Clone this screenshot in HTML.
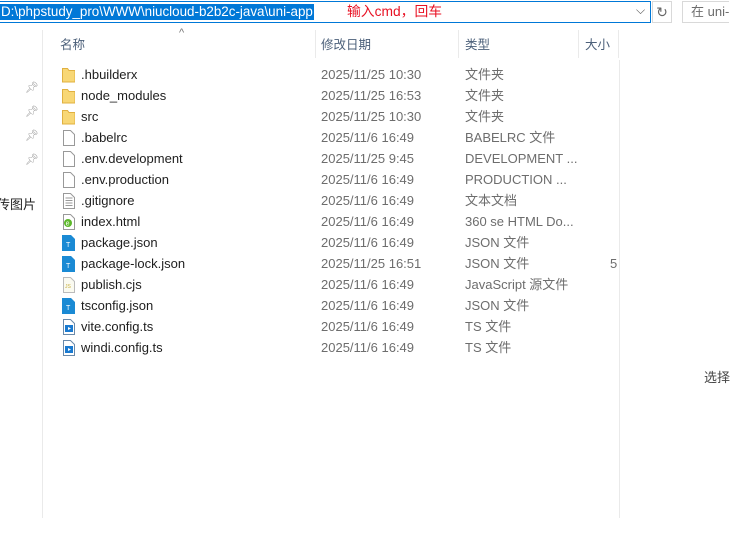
<!DOCTYPE html>
<html><head><meta charset="utf-8"><style>
*{margin:0;padding:0;box-sizing:border-box}
body{width:747px;height:543px;background:#fff;position:relative;overflow:hidden;font-family:"Liberation Sans","Noto Sans CJK SC",sans-serif;font-size:13px;color:#1e1e1e}
.a{position:absolute;white-space:nowrap}
.addr{left:-1px;top:1px;width:652px;height:22px;border:1px solid #0078d7}
.sel{left:0;top:4px;height:16px;background:#0078d7;color:#fff;padding:0 1px;line-height:16px;font-size:13.4px}
.red{left:347px;top:4px;color:#e81123;font-size:13.8px;line-height:16px}
.vl{position:absolute;width:1px;background:#eaeaea}
.hd{top:34px;color:#4c607a;font-size:12.5px}
.row{position:absolute;left:0;height:21px;width:747px}
.row span{position:absolute;top:3px;line-height:15px}
.n{left:81px;color:#1e1e1e}
.d{left:321px;color:#6d6d6d}
.t{left:465px;color:#6d6d6d}
.ic{position:absolute;left:62px;top:3px;width:13px;height:16px}
</style></head><body>
<div class="a addr"></div>
<div class="a sel">D:\phpstudy_pro\WWW\niucloud-b2b2c-java\uni-app</div>
<div class="a red">输入cmd，回车</div>
<div class="a" style="left:636px;top:3px;color:#555;font-size:12px">⌵</div>
<div class="a" style="left:652px;top:1px;width:20px;height:22px;border:1px solid #d9d9d9;color:#666;text-align:center;font-size:14px;line-height:20px">↻</div>
<div class="a" style="left:682px;top:1px;width:47px;height:22px;border:1px solid #d9d9d9;border-right:none;color:#6d6d6d;padding-left:8px;line-height:20px;overflow:hidden">在 uni-</div>
<div class="vl" style="left:42px;top:30px;height:488px"></div>
<div class="vl" style="left:619px;top:60px;height:458px"></div>
<div class="vl" style="left:315px;top:30px;height:28px"></div>
<div class="vl" style="left:458px;top:30px;height:28px"></div>
<div class="vl" style="left:578px;top:30px;height:28px"></div>
<div class="vl" style="left:618px;top:30px;height:28px"></div>
<div class="a" style="left:179px;top:27px;color:#777;font-size:11px">^</div>
<div class="a hd" style="left:60px">名称</div>
<div class="a hd" style="left:321px">修改日期</div>
<div class="a hd" style="left:465px">类型</div>
<div class="a hd" style="left:585px">大小</div>
<div class="a" style="left:25px;top:76px;color:#999;font-size:11px;line-height:24px">📌︎<br>📌︎<br>📌︎<br>📌︎</div>
<div class="a" style="left:-3px;top:194px">传图片</div>
<div class="a" style="left:704px;top:367px;color:#444">选择</div>
<svg width="0" height="0" style="position:absolute"><defs>
<g id="fo"><path d="M0.5 1.5h5l1.5 2h6v11.5h-12.5z" fill="#f8d775" stroke="#e0b040"/></g>
<g id="fi"><path d="M1.5 0.5h7l4 4v11h-11z" fill="#fff" stroke="#999"/></g>
<g id="tx"><path d="M1.5 0.5h7l4 4v11h-11z" fill="#fff" stroke="#999"/><path d="M3.5 5h7M3.5 7.5h7M3.5 10h7M3.5 12.5h7" stroke="#999"/></g>
<g id="ts"><path d="M0 0h9l4 4v12h-13z" fill="#1a8ad4"/><text x="4" y="12" font-size="7" fill="#fff" font-family="Liberation Sans">T</text></g>
<g id="js"><path d="M1.5 0.5h7l4 4v11h-11z" fill="#fafaf0" stroke="#bbb"/><text x="3" y="11" font-size="5" fill="#c9b040" font-family="Liberation Sans">JS</text></g>
<g id="ht"><path d="M1.5 0.5h7l4 4v11h-11z" fill="#fff" stroke="#999"/><circle cx="6" cy="9" r="4" fill="#5cb82a"/><text x="3.6" y="11.5" font-size="7" fill="#fff" font-family="Liberation Sans">e</text></g>
<g id="vt"><path d="M1.5 0.5h7l4 4v11h-11z" fill="#fff" stroke="#6a8aaa"/><rect x="3" y="6" width="8" height="7" fill="#1a7ad0"/><path d="M6 8l3 1.5-3 1.5z" fill="#fff"/></g>
</defs></svg>
<div class="row" style="top:64px"><svg class="ic"><use href="#fo"/></svg><span class="n">.hbuilderx</span><span class="d">2025/11/25 10:30</span><span class="t">文件夹</span></div>
<div class="row" style="top:85px"><svg class="ic"><use href="#fo"/></svg><span class="n">node_modules</span><span class="d">2025/11/25 16:53</span><span class="t">文件夹</span></div>
<div class="row" style="top:106px"><svg class="ic"><use href="#fo"/></svg><span class="n">src</span><span class="d">2025/11/25 10:30</span><span class="t">文件夹</span></div>
<div class="row" style="top:127px"><svg class="ic"><use href="#fi"/></svg><span class="n">.babelrc</span><span class="d">2025/11/6 16:49</span><span class="t">BABELRC 文件</span></div>
<div class="row" style="top:148px"><svg class="ic"><use href="#fi"/></svg><span class="n">.env.development</span><span class="d">2025/11/25 9:45</span><span class="t">DEVELOPMENT ...</span></div>
<div class="row" style="top:169px"><svg class="ic"><use href="#fi"/></svg><span class="n">.env.production</span><span class="d">2025/11/6 16:49</span><span class="t">PRODUCTION ...</span></div>
<div class="row" style="top:190px"><svg class="ic"><use href="#tx"/></svg><span class="n">.gitignore</span><span class="d">2025/11/6 16:49</span><span class="t">文本文档</span></div>
<div class="row" style="top:211px"><svg class="ic"><use href="#ht"/></svg><span class="n">index.html</span><span class="d">2025/11/6 16:49</span><span class="t">360 se HTML Do...</span></div>
<div class="row" style="top:232px"><svg class="ic"><use href="#ts"/></svg><span class="n">package.json</span><span class="d">2025/11/6 16:49</span><span class="t">JSON 文件</span></div>
<div class="row" style="top:253px"><svg class="ic"><use href="#ts"/></svg><span class="n">package-lock.json</span><span class="d">2025/11/25 16:51</span><span class="t">JSON 文件</span><span style="left:610px;color:#6d6d6d;width:8px;overflow:hidden">5</span></div>
<div class="row" style="top:274px"><svg class="ic"><use href="#js"/></svg><span class="n">publish.cjs</span><span class="d">2025/11/6 16:49</span><span class="t">JavaScript 源文件</span></div>
<div class="row" style="top:295px"><svg class="ic"><use href="#ts"/></svg><span class="n">tsconfig.json</span><span class="d">2025/11/6 16:49</span><span class="t">JSON 文件</span></div>
<div class="row" style="top:316px"><svg class="ic"><use href="#vt"/></svg><span class="n">vite.config.ts</span><span class="d">2025/11/6 16:49</span><span class="t">TS 文件</span></div>
<div class="row" style="top:337px"><svg class="ic"><use href="#vt"/></svg><span class="n">windi.config.ts</span><span class="d">2025/11/6 16:49</span><span class="t">TS 文件</span></div>
</body></html>
